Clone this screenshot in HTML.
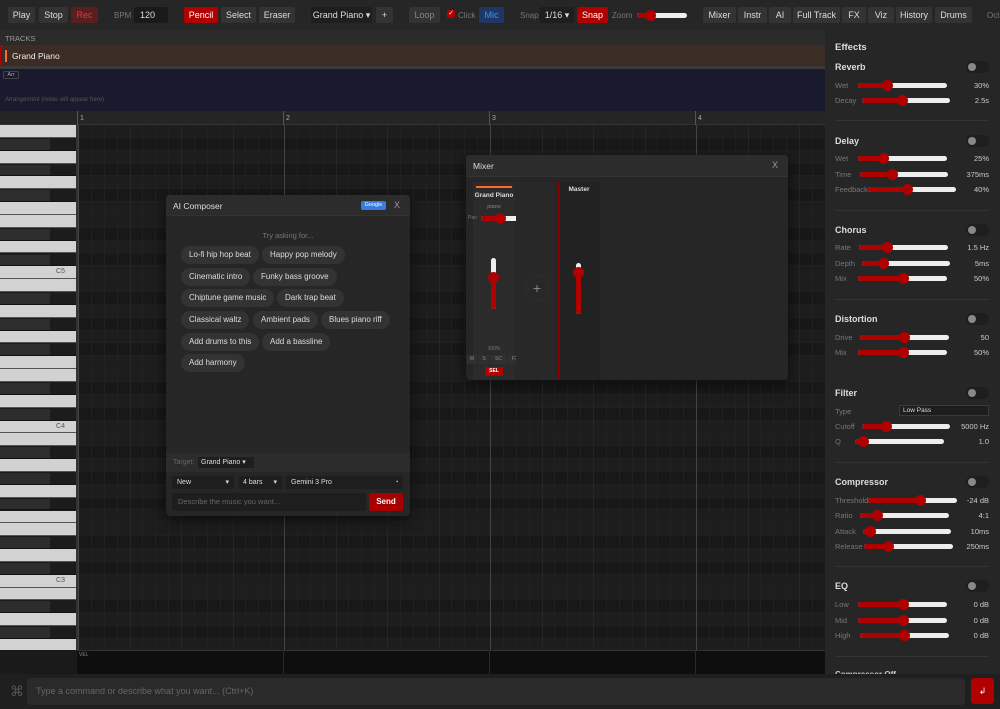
<!DOCTYPE html>
<html><head><meta charset="utf-8"><style>
*{box-sizing:border-box;margin:0;padding:0}
body{width:1000px;height:709px;overflow:hidden;background:#1a1a1a;font-family:"Liberation Sans",sans-serif;color:#ddd;position:relative}
.a{position:absolute}
.btn{position:absolute;top:7px;height:16px;background:#333;border-radius:2px;font-size:9px;color:#ddd;text-align:center;line-height:16px}
.red{background:#b00000;color:#fff}
.lbl{position:absolute;font-size:8px;color:#777}
.sl{position:absolute;height:5px;background:#eee;border-radius:3px}
.sl i{position:absolute;left:0;top:0;height:5px;background:#b00000;border-radius:3px}
.sl b{position:absolute;top:-3px;width:11px;height:11px;border-radius:50%;background:#b00000;margin-left:-5px}
.fx{position:absolute;left:835px;font-size:7.5px;color:#777}
.fv{position:absolute;right:11px;font-size:7.5px;color:#ccc;text-align:right}
.ft{position:absolute;left:835px;font-size:9px;font-weight:bold;color:#ddd}
.tg{position:absolute;left:966px;width:23px;height:12px;border-radius:6px;background:#1e1e1e}
.tg:after{content:"";position:absolute;left:2px;top:2px;width:8px;height:8px;border-radius:50%;background:#888}
.dv{position:absolute;left:835px;width:154px;height:1px;background:#333}
.chip{position:absolute;height:18px;border-radius:9px;background:#333;font-size:8px;color:#ddd;line-height:18px;padding:0 8px}
</style></head><body>
<!-- toolbar -->
<div class="a" style="left:0;top:0;width:1000px;height:30px;background:#262626"></div>
<div class="btn" style="left:8px;width:27px">Play</div>
<div class="btn" style="left:39px;width:29px">Stop</div>
<div class="btn" style="left:71px;width:27px;background:#5a1e1e;color:#e33">Rec</div>
<div class="lbl" style="left:114px;top:11px">BPM</div>
<div class="btn" style="left:134px;width:34px;background:#1a1a1a;text-align:left;padding-left:6px">120</div>
<div class="btn red" style="left:184px;width:34px">Pencil</div>
<div class="btn" style="left:221px;width:35px">Select</div>
<div class="btn" style="left:259px;width:36px">Eraser</div>
<div class="btn" style="left:311px;width:61px;background:#1e1e1e">Grand Piano ▾</div>
<div class="btn" style="left:376px;width:17px">+</div>
<div class="btn" style="left:409px;width:31px;color:#888">Loop</div>
<div class="a" style="left:447px;top:10px;width:8px;height:8px;background:#b00000;border-radius:1px;font-size:7px;color:#fff;line-height:8px;text-align:center">✓</div>
<div class="lbl" style="left:458px;top:11px">Click</div>
<div class="btn" style="left:479px;width:25px;background:#1d3766;color:#4a90e2">Mic</div>
<div class="lbl" style="left:520px;top:11px">Snap</div>
<div class="btn" style="left:540px;width:34px;background:#1e1e1e">1/16 ▾</div>
<div class="btn red" style="left:577px;width:31px">Snap</div>
<div class="lbl" style="left:612px;top:11px">Zoom</div>
<div class="sl" style="left:637px;top:13px;width:50px"><i style="width:13px"></i><b style="left:13px"></b></div>
<div class="btn" style="left:703px;width:33px">Mixer</div>
<div class="btn" style="left:738px;width:29px">Instr</div>
<div class="btn" style="left:769px;width:22px">AI</div>
<div class="btn" style="left:793px;width:47px">Full Track</div>
<div class="btn" style="left:842px;width:24px">FX</div>
<div class="btn" style="left:868px;width:26px">Viz</div>
<div class="btn" style="left:896px;width:36px">History</div>
<div class="btn" style="left:935px;width:37px">Drums</div>
<div class="lbl" style="left:987px;top:11px">Oct:</div>
<!-- tracks -->
<div class="a" style="left:0;top:30px;width:825px;height:15px;background:#2b2b2b;font-size:7.5px;color:#999;padding:4px 5px">TRACKS</div>
<div class="a" style="left:0;top:45px;width:825px;height:21px;background:#3b2c25;border-left:2px solid #b00000"></div>
<div class="a" style="left:5px;top:50px;width:2px;height:12px;background:#ff6a2a"></div>
<div class="a" style="left:12px;top:51px;font-size:8.5px;color:#eee">Grand Piano</div>
<div class="a" style="left:0;top:66px;width:825px;height:3px;background:#3a3a3a"></div>
<div class="a" style="left:0;top:69px;width:825px;height:42px;background:#1a1a2e"></div>
<div class="a" style="left:3px;top:71px;width:16px;height:8px;border:1px solid #444;border-radius:2px;font-size:5.5px;color:#aaa;text-align:center;line-height:6px">Arr</div>
<div class="a" style="left:5px;top:97px;font-size:6px;color:#555">Arrangement (notes will appear here)</div>
<!-- ruler -->
<div class="a" style="left:0;top:111px;width:825px;height:14px;background:#252525;border-bottom:1px solid #333"></div>
<div class="a" id="ruler"></div>
<div class="a" id="roll" style="left:0;top:125px;width:825px;height:525px;overflow:hidden"></div>
<div class="a" style="left:77px;top:650px;width:748px;height:24px;background:#0e0e0e;border-top:1px solid #333"></div>
<div class="a" style="left:79px;top:652px;font-size:5px;color:#888">VEL</div>
<div class="a" style="left:283px;top:650px;width:1px;height:24px;background:#2a2a2a"></div>
<div class="a" style="left:489px;top:650px;width:1px;height:24px;background:#2a2a2a"></div>
<div class="a" style="left:695px;top:650px;width:1px;height:24px;background:#2a2a2a"></div>
<!-- bottom bar -->
<div class="a" style="left:0;top:674px;width:1000px;height:35px;background:#1f1f1f"></div>
<div class="a" style="left:10px;top:683px;font-size:14px;color:#555">⌘</div>
<div class="a" style="left:27px;top:678px;width:938px;height:27px;background:#2a2a2a;border-radius:4px;font-size:9px;color:#666;line-height:27px;padding-left:9px">Type a command or describe what you want... (Ctrl+K)</div>
<div class="a" style="left:971px;top:678px;width:23px;height:26px;background:#b00000;border-radius:3px;color:#fff;font-size:9px;text-align:center;line-height:26px">↲</div>
<!-- effects panel -->
<div class="a" style="left:825px;top:30px;width:175px;height:644px;background:#262626;overflow:hidden"><div style="position:absolute;left:10px;top:640px;font-size:8px;color:#ccc;font-weight:bold">Compressor Off</div></div>
<div class="ft" style="top:42px;font-size:9.5px">Effects</div>
<div id="fxp"></div>
<div class="a" style="left:899px;top:405px;width:90px;height:11px;background:#1e1e1e;border:1px solid #3a3a3a;font-size:6.5px;color:#ddd;padding-left:3px;line-height:9px">Low Pass</div>
<div class="fx" style="top:407px">Type</div>
<!-- mixer -->
<div class="a" style="left:466px;top:155px;width:322px;height:225px;background:#262626;border-radius:4px;box-shadow:0 4px 14px rgba(0,0,0,.6);overflow:hidden">
<div style="position:absolute;left:0;top:0;width:322px;height:22px;background:#2c2c2c;border-bottom:1px solid #333"></div>
<div style="position:absolute;left:7px;top:6px;font-size:8.5px;color:#ddd">Mixer</div>
<div style="position:absolute;left:306px;top:5px;font-size:9px;color:#999">X</div>
<div style="position:absolute;left:7px;top:27px;width:42px;height:198px;background:#2b2b2b"></div>
<div style="position:absolute;left:10px;top:31px;width:36px;height:2px;background:#ff6a2a"></div>
<div style="position:absolute;left:5px;top:37px;width:46px;text-align:center;font-size:6.5px;color:#ddd;font-weight:bold">Grand Piano</div>
<div style="position:absolute;left:7px;top:49px;width:42px;text-align:center;font-size:5.5px;color:#888">piano</div>
<div style="position:absolute;left:2px;top:60px;font-size:5px;color:#777">Pan</div>
<div class="sl" style="left:15px;top:61px;width:38px"><i style="width:19px"></i><b style="left:19px"></b></div>
<div style="position:absolute;left:25px;top:103px;width:5px;height:51px;background:#eee;border-radius:3px"><div style="position:absolute;left:0;bottom:0;width:5px;height:33px;background:#b00000;border-radius:3px"></div><div style="position:absolute;left:-3px;top:14px;width:11px;height:11px;border-radius:50%;background:#b00000"></div></div>
<div style="position:absolute;left:7px;top:191px;width:42px;text-align:center;font-size:5px;color:#777">100%</div>
<div style="position:absolute;left:1px;top:200px;width:10px;height:9px;background:#303030;font-size:5px;color:#888;text-align:center;line-height:9px">M</div>
<div style="position:absolute;left:13px;top:200px;width:10px;height:9px;background:#303030;font-size:5px;color:#888;text-align:center;line-height:9px">S</div>
<div style="position:absolute;left:25px;top:200px;width:15px;height:9px;background:#303030;font-size:5px;color:#888;text-align:center;line-height:9px">SC</div>
<div style="position:absolute;left:42px;top:200px;width:14px;height:9px;background:#303030;font-size:5px;color:#888;text-align:center;line-height:9px">FX</div>
<div style="position:absolute;left:19px;top:212px;width:18px;height:9px;background:#b00000;font-size:5px;color:#fff;text-align:center;line-height:9px;font-weight:bold">SEL</div>
<div style="position:absolute;left:50px;top:27px;width:40px;height:198px;background:#282828"></div>
<div style="position:absolute;left:58px;top:120px;width:26px;height:26px;border-radius:50%;border:1px solid #2e2e2e;color:#888;font-size:14px;text-align:center;line-height:24px">+</div>
<div style="position:absolute;left:92px;top:27px;width:42px;height:198px;background:#222;border-left:2px solid #8a0000"></div>
<div style="position:absolute;left:92px;top:31px;width:42px;text-align:center;font-size:6.5px;color:#ddd;font-weight:bold">Master</div>
<div style="position:absolute;left:110px;top:108px;width:5px;height:51px;background:#eee;border-radius:3px"><div style="position:absolute;left:0;bottom:0;width:5px;height:42px;background:#b00000;border-radius:3px"></div><div style="position:absolute;left:-3px;top:4px;width:11px;height:11px;border-radius:50%;background:#b00000"></div></div>
</div>
<!-- AI composer -->
<div class="a" style="left:166px;top:195px;width:244px;height:321px;background:#262626;border-radius:4px;box-shadow:0 4px 14px rgba(0,0,0,.6)"></div>
<div class="a" style="left:166px;top:195px;width:244px;height:21px;background:#2c2c2c;border-radius:4px 4px 0 0;border-bottom:1px solid #333"></div>
<div class="a" style="left:173px;top:201px;font-size:8.5px;color:#ddd">AI Composer</div>
<div class="a" style="left:361px;top:201px;width:25px;height:9px;background:#3a7be0;border-radius:2px;font-size:5.5px;color:#fff;text-align:center;line-height:9px">Google</div>
<div class="a" style="left:394px;top:200px;font-size:9px;color:#999">X</div>
<div class="a" style="left:166px;top:231px;width:244px;text-align:center;font-size:7.5px;color:#777">Try asking for...</div>
<div class="chip" style="left:181px;top:246px">Lo-fi hip hop beat</div>
<div class="chip" style="left:262px;top:246px">Happy pop melody</div>
<div class="chip" style="left:181px;top:268px">Cinematic intro</div>
<div class="chip" style="left:253px;top:268px">Funky bass groove</div>
<div class="chip" style="left:181px;top:289px">Chiptune game music</div>
<div class="chip" style="left:277px;top:289px">Dark trap beat</div>
<div class="chip" style="left:181px;top:311px">Classical waltz</div>
<div class="chip" style="left:253px;top:311px">Ambient pads</div>
<div class="chip" style="left:321px;top:311px">Blues piano riff</div>
<div class="chip" style="left:181px;top:333px">Add drums to this</div>
<div class="chip" style="left:262px;top:333px">Add a bassline</div>
<div class="chip" style="left:181px;top:354px">Add harmony</div>
<div class="a" style="left:166px;top:453px;width:244px;height:19px;background:#2c2c2c"></div>
<div class="a" style="left:173px;top:459px;font-size:7px;color:#666">Target:</div>
<div class="a" style="left:198px;top:457px;width:56px;height:11px;background:#1e1e1e;font-size:7px;color:#ddd;padding-left:3px;line-height:11px">Grand Piano ▾</div>
<div class="a" style="left:172px;top:476px;width:62px;height:13px;background:#1e1e1e;font-size:7px;color:#ddd;padding-left:5px;line-height:13px">New<span style="position:absolute;right:5px">▾</span></div>
<div class="a" style="left:239px;top:476px;width:43px;height:13px;background:#1e1e1e;font-size:7px;color:#ddd;padding-left:4px;line-height:13px">4 bars<span style="position:absolute;right:5px">▾</span></div>
<div class="a" style="left:286px;top:476px;width:117px;height:13px;background:#1e1e1e;font-size:7px;color:#ddd;padding-left:5px;line-height:13px">Gemini 3 Pro<span style="position:absolute;right:5px;font-size:5px">▪</span></div>
<div class="a" style="left:172px;top:493px;width:194px;height:18px;background:#1e1e1e;border-radius:2px;font-size:7.5px;color:#666;padding-left:6px;line-height:18px">Describe the music you want...</div>
<div class="a" style="left:369px;top:493px;width:34px;height:18px;background:#a80000;border-radius:2px;font-size:8px;color:#fff;font-weight:bold;text-align:center;line-height:18px">Send</div>
<script>
var roll=document.getElementById('roll'),h='';
var pat=[0,1,0,1,0,1,0,0,1,0,1,0];
var names={11:'C5',23:'C4',35:'C3'};
var rh=12.85;
for(var r=0;r<41;r++){var y=r*rh;var bl=pat[r%12];
 h+='<div style="position:absolute;left:77px;top:'+y+'px;width:748px;height:'+rh+'px;background:'+(bl?'#181818':'#1d1d1d')+';border-bottom:1px solid #202020"></div>';
 if(bl){h+='<div style="position:absolute;left:0;top:'+y+'px;width:77px;height:'+rh+'px;background:#1c1c1c;border-bottom:1px solid #111"></div><div style="position:absolute;left:0;top:'+(y+1)+'px;width:50px;height:'+(rh-2)+'px;background:#2d2d2d"></div>';}
 else{h+='<div style="position:absolute;left:0;top:'+y+'px;width:77px;height:'+rh+'px;background:#d2d2d2;border-bottom:1px solid #555;font-size:7px;color:#555;text-align:right;padding-right:12px;line-height:'+rh+'px">'+(names[r]||'')+'</div>';}
}
for(var i=0;i<58;i++){var x=78+i*12.875;var c=i%16==0?'#444':(i%4==0?'#262626':'#212121');h+='<div style="position:absolute;left:'+x+'px;top:0;width:1px;height:525px;background:'+c+'"></div>';}
h+='<div style="position:absolute;left:76px;top:0;width:2px;height:525px;background:#333"></div>';
roll.innerHTML=h;
var ru='';for(var b=0;b<4;b++){var x=78+b*206;ru+='<div style="position:absolute;left:'+(x-1)+'px;top:111px;width:1px;height:14px;background:#555"></div><div style="position:absolute;left:'+(x+2)+'px;top:115px;font-size:7px;color:#aaa">'+(b+1)+'</div>';}
document.getElementById('ruler').innerHTML=ru;
var fx=[['Reverb',67,[['Wet',85,858,947,887,'30%'],['Decay',100,862,950,902,'2.5s']]],
['Delay',141,[['Wet',158,858,947,883,'25%'],['Time',174,860,948,892,'375ms'],['Feedback',189,868,956,907,'40%']]],
['Chorus',230,[['Rate',247,859,948,887,'1.5 Hz'],['Depth',263,862,950,883,'5ms'],['Mix',278,858,947,903,'50%']]],
['Distortion',319,[['Drive',337,860,949,904,'50'],['Mix',352,858,947,903,'50%']]],
['Filter',393,[['Cutoff',426,862,950,886,'5000 Hz'],['Q',441,855,944,863,'1.0']]],
['Compressor',482,[['Threshold',500,868,957,920,'-24 dB'],['Ratio',515,860,949,877,'4:1'],['Attack',531,863,951,870,'10ms'],['Release',546,864,953,888,'250ms']]],
['EQ',586,[['Low',604,858,947,903,'0 dB'],['Mid',620,858,947,903,'0 dB'],['High',635,860,949,904,'0 dB']]]];
var divs=[120,210,299,462,566,656];var f='';
fx.forEach(function(s){f+='<div class="ft" style="top:'+(s[1]-5)+'px">'+s[0]+'</div><div class="tg" style="top:'+(s[1]-6)+'px"></div>';
s[2].forEach(function(r){f+='<div class="fx" style="top:'+(r[1]-4)+'px">'+r[0]+'</div><div class="sl" style="left:'+r[2]+'px;top:'+(r[1]-2)+'px;width:'+(r[3]-r[2])+'px"><i style="width:'+(r[4]-r[2])+'px"></i><b style="left:'+(r[4]-r[2])+'px"></b></div><div class="fv" style="top:'+(r[1]-4)+'px">'+r[5]+'</div>';});});
divs.forEach(function(y){f+='<div class="dv" style="top:'+y+'px"></div>';});
document.getElementById('fxp').innerHTML=f;
</script>
</body></html>
